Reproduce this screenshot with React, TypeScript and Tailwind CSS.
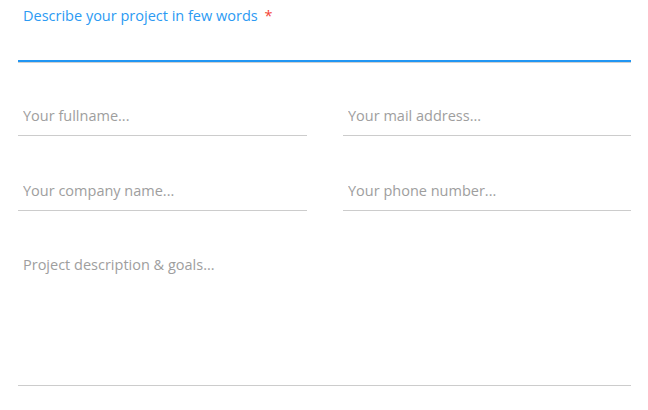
import React from "react";

const font = { fontFamily: '"Open Sans", "Noto Sans", sans-serif' };

export default function App() {
  return (
    <div className="w-[648px] h-[410px] bg-white pl-[18px] pr-[17px] pt-[6px]" style={font}>
      <div>
        <label className="block pl-[5px] text-[14.5px] leading-[20px] text-[#2b9af3]">
          Describe your project in few words <span className="ml-[3px] text-[#f44336]">*</span>
        </label>
        <input className="block w-full h-[36px] border-b-2 border-[#2196f3] outline-none px-[5px] text-[14.5px]" />
        <div className="h-px bg-[#d0d0d0]" />
      </div>

      <div className="grid grid-cols-[289px_288px] gap-x-[36px] gap-y-[34px] mt-[32px]">
        <input
          placeholder="Your fullname..."
          className="block w-full h-[41px] border-b border-[#cccccc] outline-none px-[5px] text-[14.5px] text-[#555] placeholder:text-[#9e9e9e]"
        />
        <input
          placeholder="Your mail address..."
          className="block w-full h-[41px] border-b border-[#cccccc] outline-none px-[5px] text-[14.5px] text-[#555] placeholder:text-[#9e9e9e]"
        />
        <input
          placeholder="Your company name..."
          className="block w-full h-[41px] border-b border-[#cccccc] outline-none px-[5px] text-[14.5px] text-[#555] placeholder:text-[#9e9e9e]"
        />
        <input
          placeholder="Your phone number..."
          className="block w-full h-[41px] border-b border-[#cccccc] outline-none px-[5px] text-[14.5px] text-[#555] placeholder:text-[#9e9e9e]"
        />
      </div>

      <textarea
        placeholder="Project description & goals..."
        className="block w-full h-[141px] mt-[34px] resize-none border-b border-[#cccccc] outline-none px-[5px] pt-[10px] text-[14.5px] leading-[20px] text-[#555] placeholder:text-[#9e9e9e]"
      />
    </div>
  );
}
